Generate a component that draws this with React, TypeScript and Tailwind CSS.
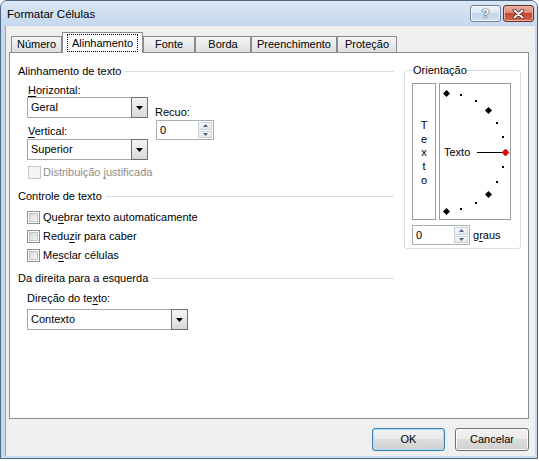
import React from "react";

type Kids = { children?: React.ReactNode };

function Header({ text }: { text: string }) {
  return (
    <div className="flex h-[15px] items-center">
      <span className="whitespace-nowrap leading-[15px]">{text}</span>
      <div className="ml-[4px] h-px flex-1 bg-[#d5dfe5]" />
    </div>
  );
}

function Combo({ value, className }: { value: string; className: string }) {
  return (
    <div className={`flex h-[21px] ${className}`}>
      <div className="flex flex-1 items-center border-y border-l border-[#a5a7ad] bg-white pl-[3px] leading-none">
        {value}
      </div>
      <div className="flex w-[17px] items-center justify-center border border-[#707070] bg-[linear-gradient(#f4f4f4,#e8e8e8_50%,#d8d8d8)]">
        <svg width="7" height="4" viewBox="0 0 7 4">
          <path d="M0 0h7L3.5 4z" fill="#000" />
        </svg>
      </div>
    </div>
  );
}

function Spin({ className }: { className: string }) {
  return (
    <div className={`flex h-[20px] border border-[#abadb3] bg-white ${className}`}>
      <div className="flex flex-1 items-center pl-[3px] leading-none">0</div>
      <div className="flex w-[15px] flex-col gap-px py-px pr-px">
        <div className="flex flex-1 items-center justify-center border border-[#c9d0d8] bg-[linear-gradient(#f8f8f8,#e4e8ec)]">
          <svg width="5" height="3" viewBox="0 0 5 3">
            <path d="M0 3h5L2.5 0z" fill="#4d6185" />
          </svg>
        </div>
        <div className="flex flex-1 items-center justify-center border border-[#c9d0d8] bg-[linear-gradient(#f8f8f8,#e4e8ec)]">
          <svg width="5" height="3" viewBox="0 0 5 3">
            <path d="M0 0h5L2.5 3z" fill="#4d6185" />
          </svg>
        </div>
      </div>
    </div>
  );
}

function Check({ disabled }: { disabled?: boolean }) {
  if (disabled) {
    return <div className="h-[13px] w-[13px] shrink-0 border border-[#c6c6c6] bg-[#f4f4f4]" />;
  }
  return (
    <div className="h-[13px] w-[13px] shrink-0 border border-[#8e8f8f] bg-white p-px">
      <div className="h-full w-full border border-[#c3c3c3] bg-[linear-gradient(135deg,#d6d6d6,#f7f7f7)]" />
    </div>
  );
}

function CheckRow({ children, className }: Kids & { className: string }) {
  return (
    <div className={`ml-[9px] flex h-[13px] items-center gap-[3px] ${className}`}>
      <Check />
      <span className="whitespace-nowrap leading-[13px]">{children}</span>
    </div>
  );
}

function Tab({ label, className }: { label: string; className: string }) {
  return (
    <div
      className={`flex h-[16px] items-center justify-center border border-b-0 border-[#898c95] bg-[linear-gradient(#f5f5f5,#ebebeb_50%,#dedede)] leading-none ${className}`}
    >
      {label}
    </div>
  );
}

function WinButton({ label, primary }: { label: string; primary?: boolean }) {
  return (
    <div
      className={`flex h-[23px] items-center justify-center rounded-[3px] border leading-none ${
        primary
          ? "w-[73px] border-[#3c7fb1] bg-[linear-gradient(#f2f2f2,#ebebeb_45%,#dddddd_50%,#cfcfcf)] shadow-[inset_0_0_0_1px_#a6e1f8]"
          : "w-[74px] border-[#707070] bg-[linear-gradient(#f2f2f2,#ebebeb_45%,#dddddd_50%,#cfcfcf)] shadow-[inset_0_0_0_1px_#fcfcfc]"
      }`}
    >
      {label}
    </div>
  );
}

function Arc() {
  const cx = 6;
  const cy = 68;
  const r = 59;
  const diamonds = [90, 45, -45, -90];
  const dots = [75, 60, 30, 15, -15, -30, -60, -75];
  const pt = (a: number) => {
    const rad = (a * Math.PI) / 180;
    return [cx + r * Math.cos(rad), cy - r * Math.sin(rad)];
  };
  const dia = (x: number, y: number, s: number) =>
    `${x},${y - s} ${x + s},${y} ${x},${y + s} ${x - s},${y}`;
  return (
    <svg width="70" height="135" viewBox="0 0 70 135">
      {dots.map((a) => {
        const [x, y] = pt(a);
        return <rect key={a} x={Math.round(x) - 1} y={Math.round(y) - 1} width="2" height="2" fill="#000" />;
      })}
      {diamonds.map((a) => {
        const [x, y] = pt(a);
        return <polygon key={a} points={dia(Math.round(x) + 0.5, Math.round(y) + 0.5, 3.5)} fill="#000" />;
      })}
      <line x1="37" y1="68.5" x2="62" y2="68.5" stroke="#000" strokeWidth="1" />
      <polygon points={dia(65.5, 68.5, 3.5)} fill="#ee0000" stroke="#7a0000" strokeWidth="0.6" />
      <text x="4" y="72" fontFamily="'Liberation Sans', Arial, sans-serif" fontSize="11" fill="#000">
        Texto
      </text>
    </svg>
  );
}

export default function App() {
  return (
    <div className="h-[461px] w-[539px] bg-white font-['Liberation_Sans',Arial,sans-serif] text-[11px] text-black">
      <div className="flex h-[459px] w-[538px] flex-col rounded-t-[7px] border border-[#4f6680] bg-[#c6d9ef]">
        {/* Title bar */}
        <div className="flex h-[25px] items-start rounded-t-[6px] bg-[linear-gradient(#dae6f4,#c5d8ee)]">
          <span className="ml-[6px] mt-[6px] text-[11.5px] leading-[14px]">Formatar Células</span>
          <div className="ml-auto mr-[3px] mt-[4px] flex gap-[2px]">
            <div className="flex h-[17px] w-[31px] items-center justify-center rounded-[3px] border border-[#6f819a] bg-[linear-gradient(#eef3fa,#dbe6f2_45%,#c3d5ea_50%,#d2e0f0)] shadow-[inset_0_0_0_1px_#f3f7fc]">
              <span className="text-[13px] font-bold leading-none text-white [text-shadow:0_0_1px_#2d3e55,0_0_1px_#2d3e55,0_0_1px_#2d3e55]">
                ?
              </span>
            </div>
            <div className="flex h-[17px] w-[31px] items-center justify-center rounded-[3px] border border-[#6e2c24] bg-[linear-gradient(#eaae9f,#dc8d7c_45%,#c8452e_50%,#d4674d)] shadow-[inset_0_0_0_1px_#eab3a6]">
              <svg width="13" height="10" viewBox="0 0 13 10">
                <path d="M2.5 1.5 L10.5 8.5 M10.5 1.5 L2.5 8.5" stroke="#3b2622" strokeWidth="3.6" strokeLinecap="round" />
                <path d="M2.5 1.5 L10.5 8.5 M10.5 1.5 L2.5 8.5" stroke="#fff" strokeWidth="2" strokeLinecap="round" />
              </svg>
            </div>
          </div>
        </div>

        {/* Frame + client */}
        <div className="flex h-[430px]">
          <div className="w-[4px]" />
          <div className="flex w-[530px] flex-col border-l border-[#8ea5c2] bg-[#f0f0f0] pl-[3px] pt-[6px]">
            {/* Tabs */}
            <div className="flex h-[20px] items-end pl-[2px]">
              <Tab label="Número" className="w-[51px]" />
              <div className="relative z-10 -mb-px flex h-[21px] w-[81px] justify-center border border-b-0 border-[#898c95] bg-white pt-px">
                <div className="flex h-[18px] w-[71px] items-center justify-center border border-dotted border-black leading-none">
                  Alinhamento
                </div>
              </div>
              <Tab label="Fonte" className="w-[52px]" />
              <Tab label="Borda" className="w-[56px]" />
              <Tab label="Preenchimento" className="w-[86px]" />
              <Tab label="Proteção" className="w-[60px]" />
            </div>

            {/* Panel */}
            <div className="flex h-[367px] w-[520px] items-start border border-[#898c95] bg-white pl-[8px]">
              {/* Left column */}
              <div className="mt-[11px] flex w-[376px] flex-col">
                <Header text="Alinhamento de texto" />
                <div className="ml-[9px] mt-[4px] flex">
                  <div className="flex w-[121px] flex-col">
                    <div className="h-[14px] pl-px leading-[14px]">
                      <span className="underline underline-offset-2">H</span>orizontal:
                    </div>
                    <Combo value="Geral" className="w-[121px]" />
                    <div className="mt-[6px] h-[14px] pl-px leading-[14px]">
                      <span className="underline underline-offset-2">V</span>ertical:
                    </div>
                    <div className="mt-px">
                      <Combo value="Superior" className="w-[121px]" />
                    </div>
                  </div>
                  <div className="ml-[7px] mt-[22px] flex flex-col">
                    <div className="h-[14px] leading-[14px]">Recuo:</div>
                    <div className="ml-px mt-px">
                      <Spin className="w-[58px]" />
                    </div>
                  </div>
                </div>
                <div className="ml-[10px] mt-[6px] flex h-[13px] items-center gap-[2px] text-[#8d8d8d]">
                  <Check disabled />
                  <span className="leading-[13px]">
                    Distribuição <span className="underline underline-offset-2">j</span>ustificada
                  </span>
                </div>

                <div className="mt-[10px]">
                  <Header text="Controle de texto" />
                </div>
                <CheckRow className="mt-[7px]">
                  Qu<span className="underline underline-offset-2">e</span>brar texto automaticamente
                </CheckRow>
                <CheckRow className="mt-[6px]">
                  Redu<span className="underline underline-offset-2">z</span>ir para caber
                </CheckRow>
                <CheckRow className="mt-[6px]">
                  Me<span className="underline underline-offset-2">s</span>clar células
                </CheckRow>

                <div className="mt-[9px]">
                  <Header text="Da direita para a esquerda" />
                </div>
                <div className="ml-[9px] mt-[5px] h-[14px] leading-[14px]">
                  Direção do te<span className="underline underline-offset-2">x</span>to:
                </div>
                <div className="ml-[9px] mt-[4px]">
                  <Combo value="Contexto" className="w-[161px]" />
                </div>
              </div>

              {/* Orientation group */}
              <fieldset className="ml-[10px] mt-[10px] w-[117px] rounded-[3px] border border-[#d5dfe5] px-[7px] pb-[3px]">
                <legend className="ml-[1px] h-[14px] px-0 leading-[14px]">Orientação</legend>
                <div className="mt-[6px] flex gap-[3px]">
                  <div className="flex h-[137px] w-[24px] flex-col items-center border border-[#9c9c9c] pt-[35px] leading-[13.7px]">
                    <span>T</span>
                    <span>e</span>
                    <span>x</span>
                    <span>t</span>
                    <span>o</span>
                  </div>
                  <div className="h-[137px] w-[72px] border border-[#9c9c9c]">
                    <Arc />
                  </div>
                </div>
                <div className="mt-[5px] flex items-center">
                  <Spin className="w-[58px]" />
                  <span className="ml-[3px] leading-[14px]">
                    g<span className="underline underline-offset-2">r</span>aus
                  </span>
                </div>
              </fieldset>
            </div>

            {/* Buttons */}
            <div className="mt-[9px] flex justify-end gap-[10px] pr-[6px]">
              <WinButton label="OK" primary />
              <WinButton label="Cancelar" />
            </div>
          </div>
          <div className="w-[2px]" />
        </div>
      </div>
    </div>
  );
}
